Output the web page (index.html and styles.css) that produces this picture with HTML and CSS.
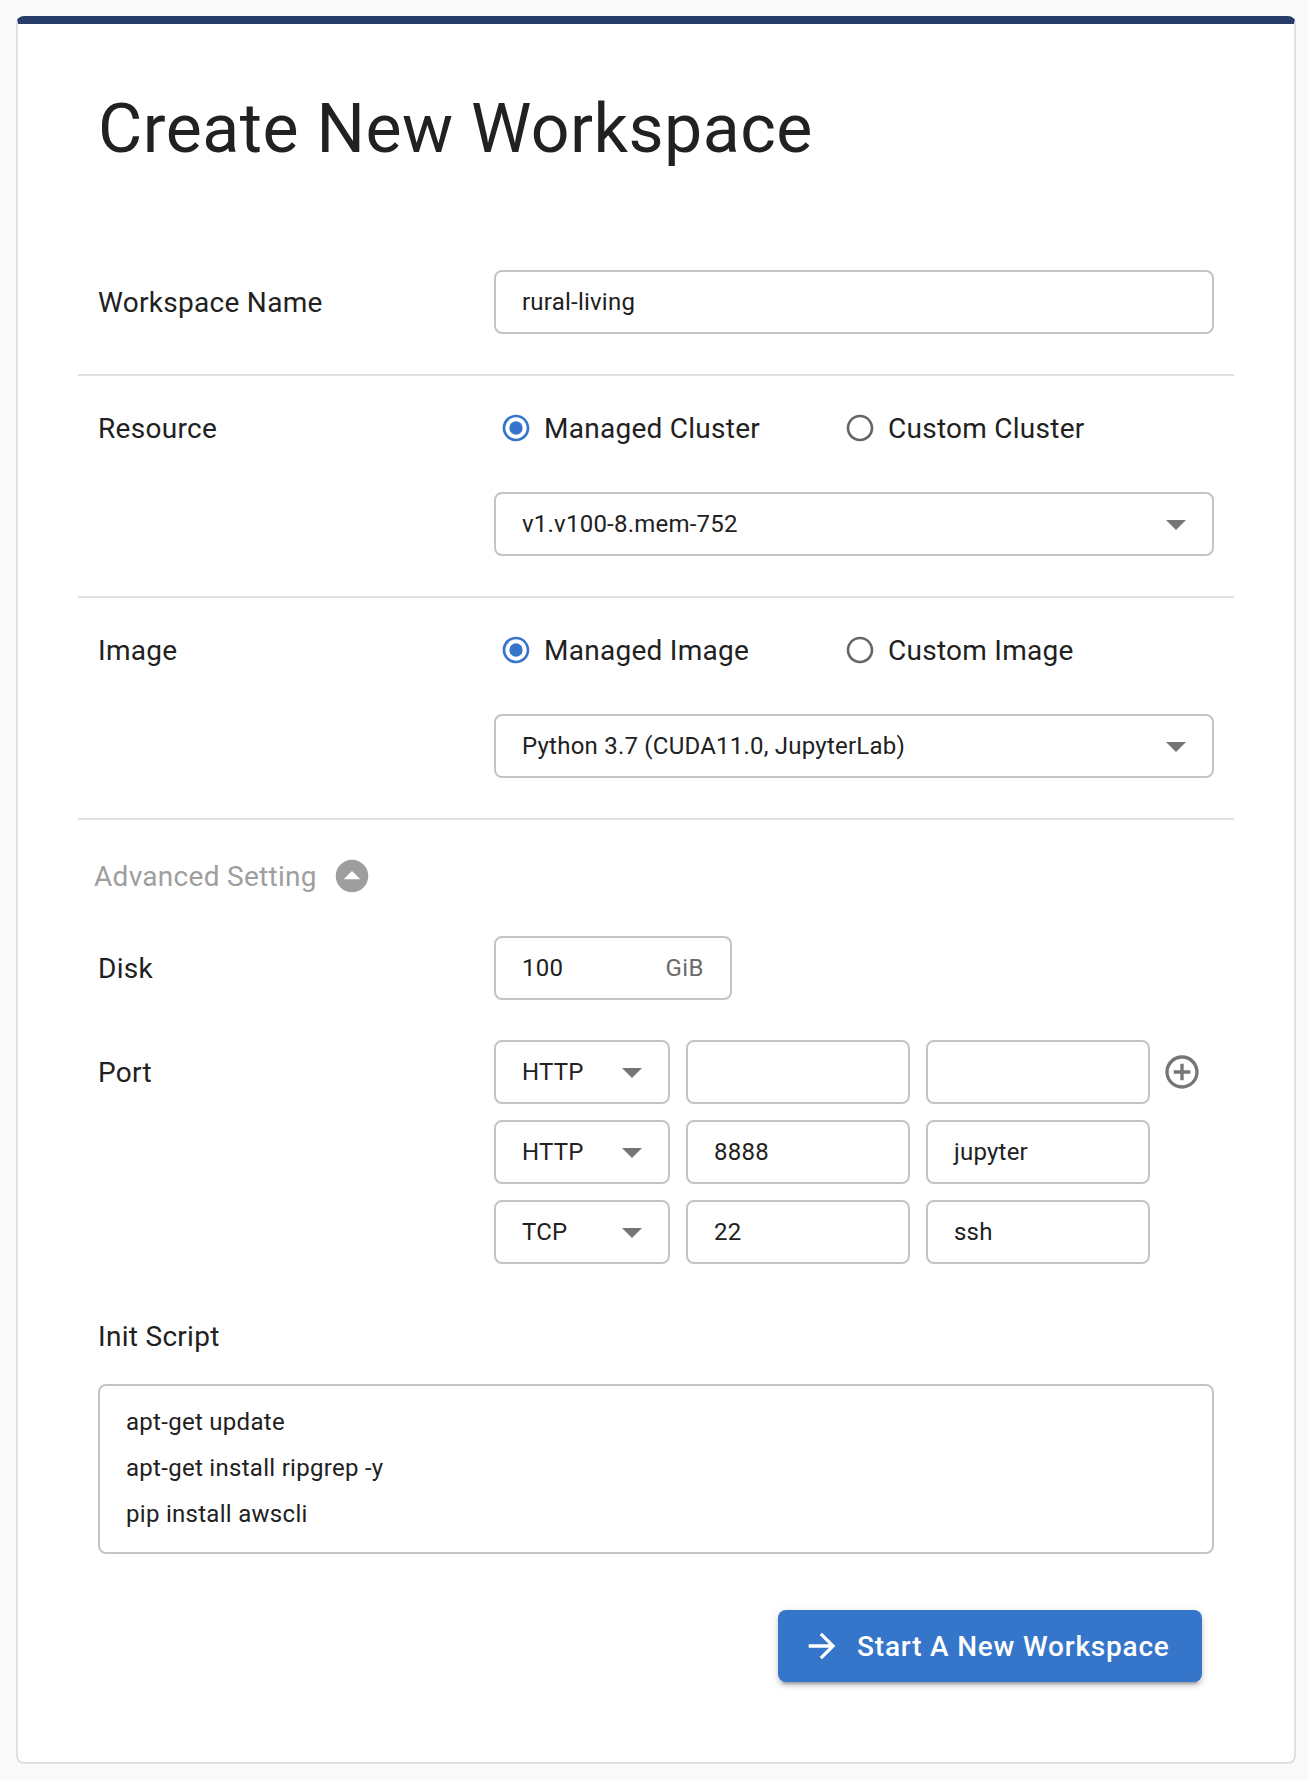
FILE: index.html
```html
<!DOCTYPE html>
<html lang="en">
<head>
<meta charset="utf-8">
<title>Create New Workspace</title>
<link rel="stylesheet" href="styles.css">
</head>
<body>
<svg class="defs" width="0" height="0" aria-hidden="true">
  <symbol id="radio-on" viewBox="0 0 24 24"><path d="M12 2C6.48 2 2 6.48 2 12s4.48 10 10 10 10-4.48 10-10S17.52 2 12 2zm0 18c-4.42 0-8-3.58-8-8s3.58-8 8-8 8 3.58 8 8-3.58 8-8 8z"/><circle cx="12" cy="12" r="5"/></symbol>
  <symbol id="radio-off" viewBox="0 0 24 24"><path d="M12 2C6.48 2 2 6.48 2 12s4.48 10 10 10 10-4.48 10-10S17.52 2 12 2zm0 18c-4.42 0-8-3.58-8-8s3.58-8 8-8 8 3.58 8 8-3.58 8-8 8z"/></symbol>
  <symbol id="drop-down" viewBox="0 0 24 24"><path d="M7 10l5 5 5-5z"/></symbol>
  <symbol id="drop-up-circle" viewBox="0 0 24 24"><path fill-rule="evenodd" d="M12 2.25a9.75 9.75 0 1 0 0 19.5 9.75 9.75 0 0 0 0-19.5zM17 14H7l5-5z"/></symbol>
  <symbol id="add-circle" viewBox="0 0 24 24"><path d="M13 7h-2v4H7v2h4v4h2v-4h4v-2h-4V7zm-1-5C6.48 2 2 6.48 2 12s4.48 10 10 10 10-4.48 10-10S17.52 2 12 2zm0 18c-4.41 0-8-3.59-8-8s3.59-8 8-8 8 3.59 8 8-3.59 8-8 8z"/></symbol>
  <symbol id="arrow-right" viewBox="0 0 24 24"><path d="M12 4l-1.41 1.41L16.17 11H4v2h12.17l-5.58 5.59L12 20l8-8z"/></symbol>
</svg>
<main class="card">
  <h1 class="title">Create New Workspace</h1>

  <section class="section row">
    <div class="label">Workspace Name</div>
    <div class="field">rural-living</div>
  </section>

  <section class="section section-choice row">
    <div class="label">Resource</div>
    <div class="stack">
      <div class="radios">
        <div class="radio"><svg class="radio-icon checked"><use href="#radio-on"/></svg><span>Managed Cluster</span></div>
        <div class="radio"><svg class="radio-icon"><use href="#radio-off"/></svg><span>Custom Cluster</span></div>
      </div>
      <div class="field select"><span>v1.v100-8.mem-752</span><svg class="caret"><use href="#drop-down"/></svg></div>
    </div>
  </section>

  <section class="section section-choice row">
    <div class="label">Image</div>
    <div class="stack">
      <div class="radios">
        <div class="radio"><svg class="radio-icon checked"><use href="#radio-on"/></svg><span>Managed Image</span></div>
        <div class="radio"><svg class="radio-icon"><use href="#radio-off"/></svg><span>Custom Image</span></div>
      </div>
      <div class="field select"><span>Python 3.7 (CUDA11.0, JupyterLab)</span><svg class="caret"><use href="#drop-down"/></svg></div>
    </div>
  </section>

  <div class="advanced"><span>Advanced Setting</span><svg class="icon"><use href="#drop-up-circle"/></svg></div>

  <section class="row row-advanced">
    <div class="label">Disk</div>
    <div class="field disk"><span>100</span><span class="unit">GiB</span></div>
  </section>

  <section class="row row-advanced">
    <div class="label">Port</div>
    <div class="ports">
      <div class="port">
        <div class="field select"><span>HTTP</span><svg class="caret"><use href="#drop-down"/></svg></div>
        <div class="field"></div>
        <div class="field"></div>
        <svg class="icon add"><use href="#add-circle"/></svg>
      </div>
      <div class="port">
        <div class="field select"><span>HTTP</span><svg class="caret"><use href="#drop-down"/></svg></div>
        <div class="field">8888</div>
        <div class="field">jupyter</div>
      </div>
      <div class="port">
        <div class="field select"><span>TCP</span><svg class="caret"><use href="#drop-down"/></svg></div>
        <div class="field">22</div>
        <div class="field">ssh</div>
      </div>
    </div>
  </section>

  <section class="script">
    <div class="script-label">Init Script</div>
    <div class="script-box">apt-get update
apt-get install ripgrep -y
pip install awscli</div>
  </section>

  <div class="actions">
    <button class="submit" type="button"><svg class="icon"><use href="#arrow-right"/></svg><span>Start A New Workspace</span></button>
  </div>
</main>
</body>
</html>
```
FILE: styles.css
```css
* { box-sizing: border-box; }

body {
  margin: 0;
  padding: 16px 12px 16px 16px;
  background: #fafafa;
  color: #212121;
  font-family: Roboto, "Liberation Sans", sans-serif;
  font-size: 28px;
  letter-spacing: 0.0105em;
}

svg { display: block; flex: none; fill: currentColor; }
.defs { position: absolute; }

.card {
  height: 1748px;
  padding: 62px 60px 0;
  background: #fff;
  border: 2px solid #e0e0e0;
  border-top: 8px solid #263d69;
  border-radius: 8px;
}

.title {
  margin: 0 20px 98px;
  font-size: 68px;
  font-weight: 400;
  line-height: 86px;
  letter-spacing: 0.00735em;
}

.row {
  display: grid;
  grid-template-columns: 396px 1fr;
  padding: 0 20px;
}

.section { padding-bottom: 40px; border-bottom: 2px solid #e0e0e0; }
.section-choice { padding-top: 20px; }

.label { height: 64px; line-height: 66px; }

.field {
  display: flex;
  align-items: center;
  height: 64px;
  padding: 0 26px;
  border: 2px solid #c4c4c4;
  border-radius: 8px;
  font-size: 24px;
  letter-spacing: 0.00938em;
}

.select { justify-content: space-between; padding-right: 12px; }
.caret { width: 48px; height: 48px; color: #757575; }

.stack { display: grid; gap: 32px; }

.radios { display: flex; height: 64px; padding-left: 6px; }
.radio {
  display: flex;
  align-items: center;
  gap: 12px;
  width: 344px;
  letter-spacing: 0.00938em;
}
.radio-icon { width: 32px; height: 32px; color: #666; }
.radio-icon.checked { color: #3576cb; }

.icon { width: 40px; height: 40px; }

.advanced {
  display: flex;
  align-items: center;
  gap: 15px;
  height: 76px;
  padding: 36px 0 0 16px;
  color: #9e9e9e;
}

.row-advanced { margin-top: 40px; }

.disk { width: 238px; justify-content: space-between; }
.unit { color: #6b6b6b; letter-spacing: 0.02em; }

.ports { display: grid; gap: 16px; }
.port {
  display: grid;
  grid-template-columns: 176px 224px 224px 40px;
  column-gap: 16px;
  align-items: center;
}
.add { margin-left: -4px; color: #757575; }

.script { padding: 57px 20px 0; }
.script-label { line-height: 32px; }
.script-box {
  height: 170px;
  margin-top: 31px;
  padding: 13px 26px;
  border: 2px solid #c4c4c4;
  border-radius: 8px;
  font-size: 24px;
  line-height: 46px;
  letter-spacing: 0.012em;
  white-space: pre-line;
}

.actions { display: flex; justify-content: flex-end; padding: 56px 32px 0; }
.submit {
  display: flex;
  align-items: center;
  gap: 15px;
  width: 424px;
  height: 72px;
  padding: 0 0 0 24px;
  border: 0;
  border-radius: 8px;
  background: #3576cb;
  color: #fff;
  font: 500 28px Roboto, "Liberation Sans", sans-serif;
  letter-spacing: 0.02857em;
  white-space: nowrap;
  box-shadow: 0 6px 2px -4px rgba(0, 0, 0, 0.2), 0 4px 4px rgba(0, 0, 0, 0.14), 0 2px 10px rgba(0, 0, 0, 0.12);
}
```
